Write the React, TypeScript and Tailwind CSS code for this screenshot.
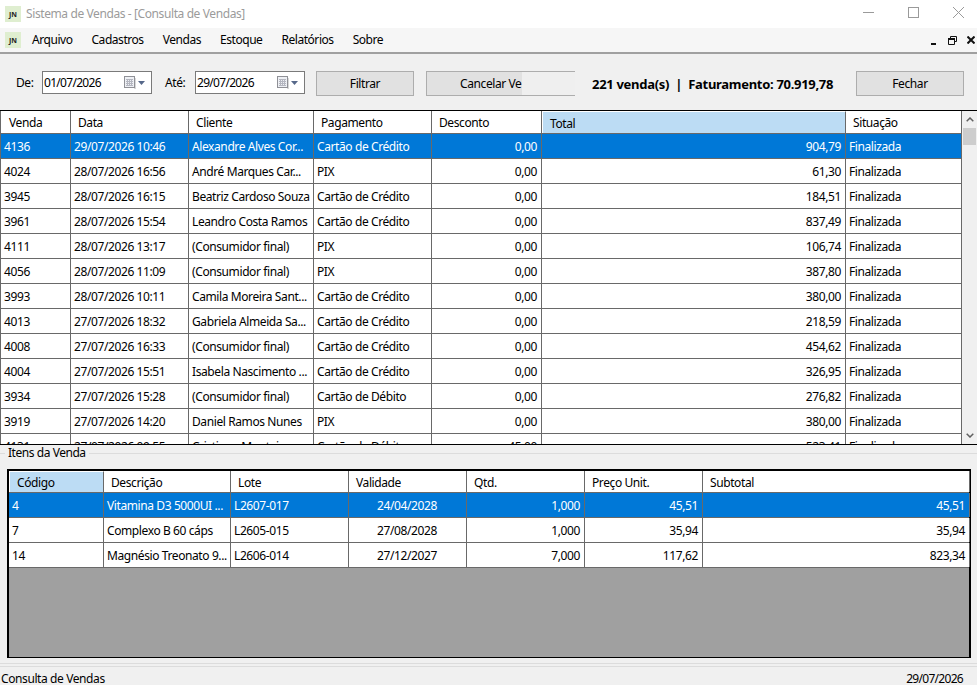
import React from 'react'

type Column = { title: string; align?: 'right' | 'center' }

const vendaCols: Column[] = [
  { title: 'Venda' },
  { title: 'Data' },
  { title: 'Cliente' },
  { title: 'Pagamento' },
  { title: 'Desconto', align: 'right' },
  { title: 'Total', align: 'right' },
  { title: 'Situação' },
]

const vendas = [
  ['4136', '29/07/2026 10:46', 'Alexandre Alves Cor...', 'Cartão de Crédito', '0,00', '904,79', 'Finalizada'],
  ['4024', '28/07/2026 16:56', 'André Marques Car...', 'PIX', '0,00', '61,30', 'Finalizada'],
  ['3945', '28/07/2026 16:15', 'Beatriz Cardoso Souza', 'Cartão de Crédito', '0,00', '184,51', 'Finalizada'],
  ['3961', '28/07/2026 15:54', 'Leandro Costa Ramos', 'Cartão de Crédito', '0,00', '837,49', 'Finalizada'],
  ['4111', '28/07/2026 13:17', '(Consumidor final)', 'PIX', '0,00', '106,74', 'Finalizada'],
  ['4056', '28/07/2026 11:09', '(Consumidor final)', 'PIX', '0,00', '387,80', 'Finalizada'],
  ['3993', '28/07/2026 10:11', 'Camila Moreira Sant...', 'Cartão de Crédito', '0,00', '380,00', 'Finalizada'],
  ['4013', '27/07/2026 18:32', 'Gabriela Almeida Sa...', 'Cartão de Crédito', '0,00', '218,59', 'Finalizada'],
  ['4008', '27/07/2026 16:33', '(Consumidor final)', 'Cartão de Crédito', '0,00', '454,62', 'Finalizada'],
  ['4004', '27/07/2026 15:51', 'Isabela Nascimento ...', 'Cartão de Crédito', '0,00', '326,95', 'Finalizada'],
  ['3934', '27/07/2026 15:28', '(Consumidor final)', 'Cartão de Débito', '0,00', '276,82', 'Finalizada'],
  ['3919', '27/07/2026 14:20', 'Daniel Ramos Nunes', 'PIX', '0,00', '380,00', 'Finalizada'],
  ['4131', '27/07/2026 09:55', 'Cristiano Monteiro', 'Cartão de Débito', '45,00', '523,41', 'Finalizada'],
]

const itemCols: Column[] = [
  { title: 'Código' },
  { title: 'Descrição' },
  { title: 'Lote' },
  { title: 'Validade', align: 'center' },
  { title: 'Qtd.', align: 'right' },
  { title: 'Preço Unit.', align: 'right' },
  { title: 'Subtotal', align: 'right' },
]

const itens = [
  ['4', 'Vitamina D3 5000UI ...', 'L2607-017', '24/04/2028', '1,000', '45,51', '45,51'],
  ['7', 'Complexo B 60 cáps', 'L2605-015', '27/08/2028', '1,000', '35,94', '35,94'],
  ['14', 'Magnésio Treonato 9...', 'L2606-014', '27/12/2027', '7,000', '117,62', '823,34'],
]

const vendaGrid = 'grid grid-cols-[70px_118px_125px_118px_110px_304px_116px]'
const itemGrid = 'grid grid-cols-[95px_127px_118px_118px_118px_118px_267px]'

function Logo() {
  return (
    <div className="flex h-4 w-4 items-center justify-center bg-[#dfeed0] text-[7px] font-bold leading-none tracking-normal text-[#222]">
      JN
    </div>
  )
}

function DataGrid({ cols, rows, gridClass, headClass, sortIndex }: { cols: Column[]; rows: string[][]; gridClass: string; headClass: string; sortIndex: number }) {
  return (
    <>
      <div className={`${gridClass} ${headClass} border-b border-[#696969] bg-white`}>
        {cols.map((c, i) => (
          <div
            key={c.title}
            className={`flex items-center border-r border-[#696969] pt-[2px] ${i === sortIndex ? 'border-l border-t border-l-white border-t-white bg-[#bcdcf4] pl-[7px]' : i === 0 ? 'pl-[8px]' : 'pl-[7px]'}`}
          >
            {c.title}
          </div>
        ))}
      </div>
      {rows.map((r, ri) => (
        <div key={r[0]} className={`${gridClass} h-[25px] border-b border-[#696969] ${ri === 0 ? 'bg-[#0078d7] text-white' : 'bg-white'}`}>
          {r.map((v, i) => (
            <div
              key={i}
              className={`flex items-center overflow-hidden whitespace-nowrap border-r border-[#696969] pl-[3px] pr-[4px] pt-[2px] ${cols[i].align === 'right' ? 'justify-end' : cols[i].align === 'center' ? 'justify-center' : ''}`}
            >
              {v}
            </div>
          ))}
        </div>
      ))}
    </>
  )
}

function DateBox({ value }: { value: string }) {
  return (
    <div className="flex h-[23px] w-[110px] items-center justify-between border border-[#7a7a7a] bg-white pl-[1px] pr-[6px]">
      <span className="pt-[1px] tracking-[-0.7px]">{value}</span>
      <div className="flex items-center gap-[2px]">
        <svg width="12" height="13" viewBox="0 0 12 13">
          <rect x="10" y="2" width="2" height="11" fill="#d8d8d8" />
          <rect x="0.5" y="0.5" width="10" height="11" fill="#eef0f4" stroke="#8f9096" />
          <path d="M2 3.500h7M2 5.500h7M2 7.500h7M2 9.500h7M3.500 3v7M5.500 3v7M7.500 3v7" stroke="#b4b6c0" strokeWidth="1" />
        </svg>
        <svg width="7" height="4" viewBox="0 0 7 4">
          <path d="M0 0h7L3.5 4z" fill="#56688a" />
        </svg>
      </div>
    </div>
  )
}

export default function App() {
  return (
    <div className="flex h-[685px] w-[977px] flex-col overflow-hidden bg-[#f0f0f0] font-['Noto_Sans',sans-serif] text-[12px] leading-none tracking-[-0.4px] text-black">
      {/* title bar */}
      <div className="flex h-[28px] shrink-0 items-center bg-white pl-[5px]">
        <Logo />
        <span className="ml-[5px] text-[#9b9b9b]">Sistema de Vendas - [Consulta de Vendas]</span>
        <div className="ml-auto flex items-center gap-[34px] pb-[3px] pr-[13px]">
          <svg width="11" height="11" viewBox="0 0 11 11"><path d="M0 5.5h11" stroke="#9a9a9a" /></svg>
          <svg width="11" height="11" viewBox="0 0 11 11"><rect x="0.5" y="0.5" width="10" height="10" fill="none" stroke="#9a9a9a" /></svg>
          <svg width="11" height="11" viewBox="0 0 11 11"><path d="M0 0l11 11M11 0L0 11" stroke="#9a9a9a" /></svg>
        </div>
      </div>

      {/* menu */}
      <div className="flex h-[24px] shrink-0 items-center bg-[#f6f6f6] pl-[5px]">
        <Logo />
        <div className="ml-[11px] flex gap-[19px] tracking-[-0.45px]">
          <span>Arquivo</span>
          <span>Cadastros</span>
          <span>Vendas</span>
          <span>Estoque</span>
          <span>Relatórios</span>
          <span>Sobre</span>
        </div>
        <div className="ml-auto flex items-center gap-[10px] pr-[2px]">
          <svg width="8" height="9" viewBox="0 0 8 9"><rect x="1" y="7" width="5" height="2" fill="#111" /></svg>
          <svg width="9" height="9" viewBox="0 0 9 9"><path d="M2.5 2V.5h6v5H7M.5 3h6v5.500h-6z" fill="none" stroke="#111" /><path d="M0 3h7" stroke="#111" strokeWidth="2" /></svg>
          <svg width="8" height="8" viewBox="0 0 8 8"><path d="M.5.5l7 7M7.500.5l-7 7" stroke="#111" strokeWidth="2" /></svg>
        </div>
      </div>
      <div className="h-[2px] shrink-0 bg-[#a0a0a0]" />

      {/* filtros */}
      <div className="flex h-[56px] shrink-0 items-start pl-[16px] pr-[13px] pt-[17px]">
        <span className="flex h-[23px] w-[26px] items-center">De:</span>
        <DateBox value="01/07/2026" />
        <span className="ml-[13px] flex h-[23px] w-[30px] items-center">Até:</span>
        <DateBox value="29/07/2026" />
        <button className="ml-[11px] h-[25px] w-[98px] border border-[#adadad] bg-[#e1e1e1]">Filtrar</button>
        <div className="relative ml-[12px] flex h-[25px] w-[149px] items-center border border-r-0 border-[#adadad] bg-[#e1e1e1] pl-[33px]">
          <span>Cancelar Ve</span>
          <div className="absolute bottom-0 right-0 top-0 w-[53px] bg-[#efefef]" />
        </div>
        <span className="ml-[17px] flex h-[27px] items-center text-[13px] font-bold tracking-[-0.3px]">221 venda(s)&nbsp;&nbsp;|&nbsp;&nbsp;Faturamento: 70.919,78</span>
        <button className="ml-auto h-[25px] w-[108px] border border-[#adadad] bg-[#e1e1e1]">Fechar</button>
      </div>

      {/* vendas */}
      <div className="flex h-[335px] shrink-0 overflow-hidden border-y border-black bg-white">
        <div className="w-[962px] shrink-0 overflow-hidden border-l border-[#696969]">
          <DataGrid cols={vendaCols} rows={vendas} gridClass={vendaGrid} headClass="h-[23px]" sortIndex={5} />
        </div>
        <div className="flex flex-1 flex-col justify-between bg-[#f0f0f0]">
          <div>
            <div className="flex h-[17px] items-center justify-center">
              <svg width="8" height="5" viewBox="0 0 8 5"><path d="M.7 4.300L4 1l3.300 3.300" fill="none" stroke="#606060" strokeWidth="1.500" /></svg>
            </div>
            <div className="mx-[1px] h-[17px] bg-[#cdcdcd]" />
          </div>
          <div className="flex h-[17px] items-center justify-center">
            <svg width="8" height="5" viewBox="0 0 8 5"><path d="M.7.700L4 4l3.300-3.300" fill="none" stroke="#606060" strokeWidth="1.500" /></svg>
          </div>
        </div>
      </div>

      {/* itens */}
      <div className="relative mt-[8px] h-[16px] shrink-0">
        <div className="absolute left-0 right-0 top-0 h-[1px] bg-[#dcdcdc]" />
        <span className="absolute left-[5px] top-[-7px] bg-[#f0f0f0] px-[3px] py-[1px] tracking-[-0.45px]">Itens da Venda</span>
      </div>
      <div className="ml-[7px] flex h-[189px] w-[964px] shrink-0 flex-col border-2 border-b border-black bg-[#a0a0a0]">
        <DataGrid cols={itemCols} rows={itens} gridClass={itemGrid} headClass="h-[22px]" sortIndex={0} />
      </div>

      {/* status */}
      <div className="mt-[5px] h-[4px] shrink-0 border-y border-[#dcdcdc]" />
      <div className="flex flex-1 items-center justify-between pl-[1px] pr-[14px] pt-[6px]">
        <span>Consulta de Vendas</span>
        <span className="tracking-[-0.7px]">29/07/2026</span>
      </div>
    </div>
  )
}
